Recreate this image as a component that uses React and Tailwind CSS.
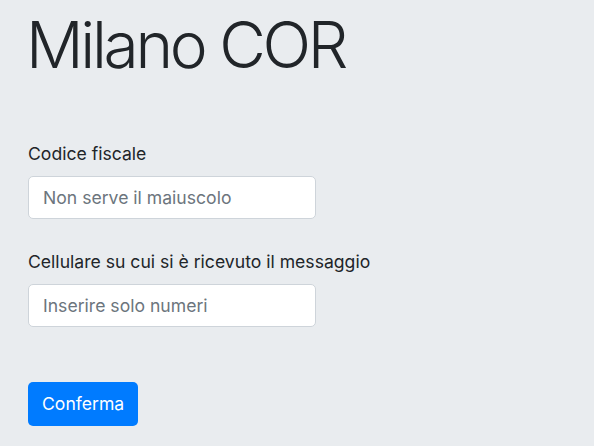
import React from 'react'

const font = { fontFamily: 'Inter, "Liberation Sans", sans-serif' }

const Field = ({ label, placeholder }) => (
  <div className="flex flex-col">
    <label className="text-[17.6px] leading-[27px] text-[#212529] mb-[9px]">{label}</label>
    <input
      type="text"
      placeholder={placeholder}
      className="w-[288px] h-[43px] px-[14px] bg-white border border-[#ced4da] rounded-[5px] text-[17.6px] text-[#495057] placeholder:text-[#6c757d] outline-none"
    />
  </div>
)

const App = () => {
  return (
    <div className="min-h-[446px] bg-[#e9ecef] px-[28px] pt-[7px]" style={font}>
      <h1 className="text-[64px] leading-[1.2] font-light text-[#212529] tracking-[-3.3px] -ml-[2px]">Milano COR</h1>

      <form className="mt-[56px] flex flex-col gap-[29px]">
        <Field label="Codice fiscale" placeholder="Non serve il maiuscolo" />
        <Field label="Cellulare su cui si è ricevuto il messaggio" placeholder="Inserire solo numeri" />
        <div className="mt-[26px]">
          <button type="button" className="h-[44px] px-[14px] bg-[#007bff] text-white text-[17.6px] rounded-[5px]">
            Conferma
          </button>
        </div>
      </form>
    </div>
  )
}

export default App
